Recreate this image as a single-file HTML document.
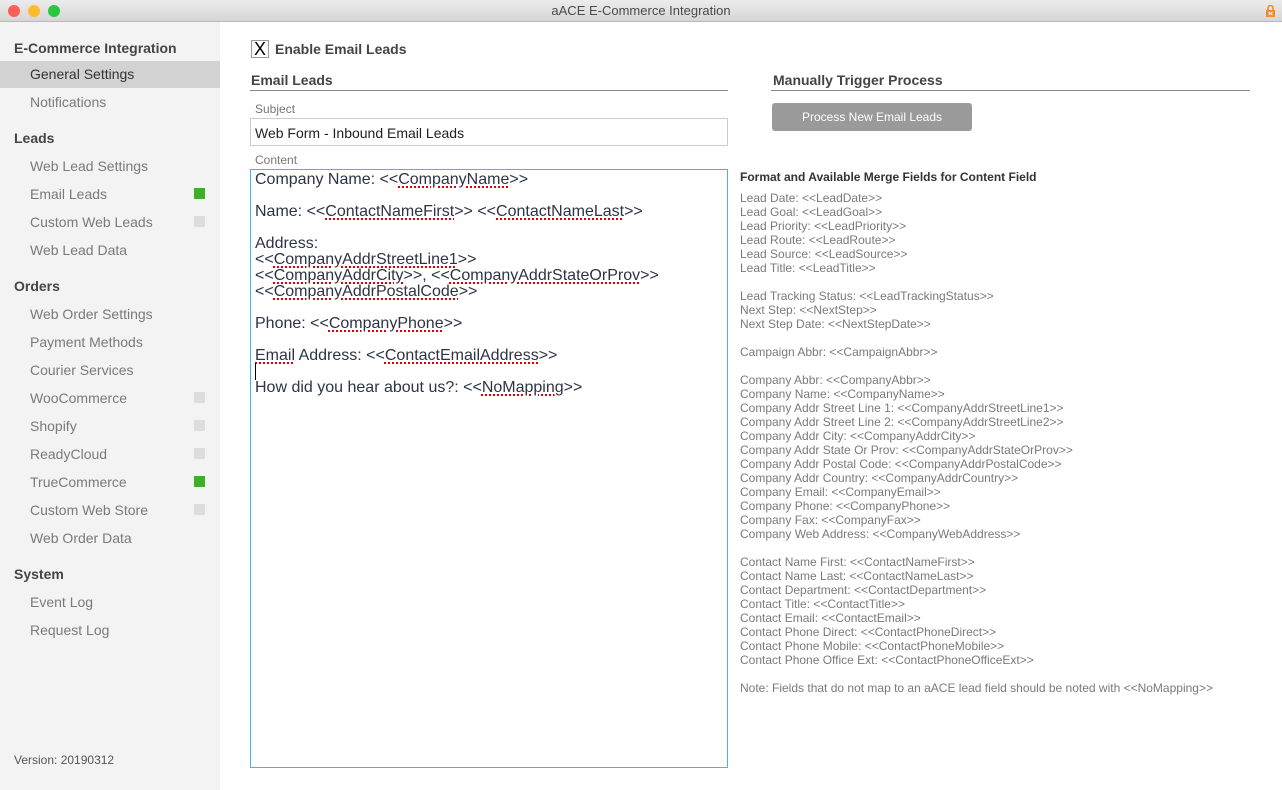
<!DOCTYPE html>
<html><head><style>
*{margin:0;padding:0;box-sizing:border-box}
body{width:1282px;height:790px;overflow:hidden;font-family:"Liberation Sans",sans-serif;background:#fff;position:relative}
.tb{position:absolute;left:0;top:0;width:1282px;height:22px;background:linear-gradient(#ececec,#d6d6d6);border-bottom:1px solid #b8b8b8;text-align:center;font-size:13px;line-height:22px;color:#4a4a4a}
.dot{position:absolute;top:5px;width:12px;height:12px;border-radius:50%}
.sb{position:absolute;left:0;top:22px;width:220px;height:768px;background:#f3f3f3}
.h{position:absolute;left:14px;font-size:14px;font-weight:bold;color:#444}
.i{position:absolute;left:30px;font-size:14px;color:#7a7a7a}
.sel{position:absolute;left:0;top:61px;width:220px;height:27px;background:#d2d2d2}
.sq{position:absolute;left:194px;width:11px;height:11px;background:#ddd}
.g{background:#3fae2a}
.abs{position:absolute}
.ta{position:absolute;left:250px;top:169px;width:478px;height:599px;border:1px solid #4ab2e6;padding:2px 4px;font-size:16px;line-height:16px;color:#2c3445}
.u{text-decoration:underline dotted #d00;text-decoration-thickness:2px;text-underline-offset:2px}
.mf{position:absolute;left:740px;top:191px;font-size:12px;line-height:14px;color:#7a7a7a;white-space:pre}
</style></head><body>
<div class="tb">aACE E-Commerce Integration
<div class="dot" style="left:8px;background:#fc5f57"></div>
<div class="dot" style="left:28px;background:#fdbc2e"></div>
<div class="dot" style="left:48px;background:#28c840"></div>
<svg class="abs" style="left:1265px;top:4px" width="11" height="14"><path d="M3 6V4a2.5 2.5 0 0 1 5 0v2" stroke="#f08a2c" stroke-width="1.6" fill="none"/><rect x="1" y="6" width="9" height="7" fill="#f08a2c"/><path d="M3.5 8l4 3M7.5 8l-4 3" stroke="#fff" stroke-width="1"/></svg>
</div>
<div class="sb">
<div class="sel" style="top:39px"></div>
<div class="h" style="top:18px">E-Commerce Integration</div>
<div class="i" style="top:44px;color:#333">General Settings</div>
<div class="i" style="top:72px">Notifications</div>
<div class="h" style="top:108px">Leads</div>
<div class="i" style="top:136px">Web Lead Settings</div>
<div class="i" style="top:164px">Email Leads</div><div class="sq g" style="top:166px"></div>
<div class="i" style="top:192px">Custom Web Leads</div><div class="sq" style="top:194px"></div>
<div class="i" style="top:220px">Web Lead Data</div>
<div class="h" style="top:256px">Orders</div>
<div class="i" style="top:284px">Web Order Settings</div>
<div class="i" style="top:312px">Payment Methods</div>
<div class="i" style="top:340px">Courier Services</div>
<div class="i" style="top:368px">WooCommerce</div><div class="sq" style="top:370px"></div>
<div class="i" style="top:396px">Shopify</div><div class="sq" style="top:398px"></div>
<div class="i" style="top:424px">ReadyCloud</div><div class="sq" style="top:426px"></div>
<div class="i" style="top:452px">TrueCommerce</div><div class="sq g" style="top:454px"></div>
<div class="i" style="top:480px">Custom Web Store</div><div class="sq" style="top:482px"></div>
<div class="i" style="top:508px">Web Order Data</div>
<div class="h" style="top:544px">System</div>
<div class="i" style="top:572px">Event Log</div>
<div class="i" style="top:600px">Request Log</div>
<div class="abs" style="left:14px;top:731px;font-size:12px;color:#555">Version: 20190312</div>
</div>
<div class="abs" style="left:251px;top:40px;width:18px;height:18px;border:1px solid #999;font-size:18px;line-height:16px;text-align:center;color:#000">X</div>
<div class="abs" style="left:275px;top:41px;font-size:14px;font-weight:bold;color:#444">Enable Email Leads</div>
<div class="abs" style="left:251px;top:72px;font-size:14px;font-weight:bold;color:#444">Email Leads</div>
<div class="abs" style="left:250px;top:90px;width:478px;height:1px;background:#888"></div>
<div class="abs" style="left:255px;top:102px;font-size:12px;color:#777">Subject</div>
<div class="abs" style="left:250px;top:118px;width:478px;height:28px;border:1px solid #ccc;padding:6px 4px;font-size:14px;color:#222">Web Form - Inbound Email Leads</div>
<div class="abs" style="left:255px;top:153px;font-size:12px;color:#777">Content</div>
<div class="ta">Company Name: &lt;&lt;<span class="u">CompanyName</span>&gt;&gt;<br><br>Name: &lt;&lt;<span class="u">ContactNameFirst</span>&gt;&gt; &lt;&lt;<span class="u">ContactNameLast</span>&gt;&gt;<br><br>Address:<br>&lt;&lt;<span class="u">CompanyAddrStreetLine1</span>&gt;&gt;<br>&lt;&lt;<span class="u">CompanyAddrCity</span>&gt;&gt;, &lt;&lt;<span class="u">CompanyAddrStateOrProv</span>&gt;&gt;<br>&lt;&lt;<span class="u">CompanyAddrPostalCode</span>&gt;&gt;<br><br>Phone: &lt;&lt;<span class="u">CompanyPhone</span>&gt;&gt;<br><br><span class="u">Email</span> Address: &lt;&lt;<span class="u">ContactEmailAddress</span>&gt;&gt;<br><span style="border-left:1px solid #000"></span><br>How did you hear about us?: &lt;&lt;<span class="u">NoMapping</span>&gt;&gt;</div>
<div class="abs" style="left:773px;top:72px;font-size:14px;font-weight:bold;color:#444">Manually Trigger Process</div>
<div class="abs" style="left:771px;top:90px;width:479px;height:1px;background:#888"></div>
<div class="abs" style="left:772px;top:103px;width:200px;height:28px;background:#9a9a9a;border-radius:3px;color:#fff;font-size:12px;line-height:28px;text-align:center">Process New Email Leads</div>
<div class="abs" style="left:740px;top:170px;font-size:12px;font-weight:bold;color:#333">Format and Available Merge Fields for Content Field</div>
<div class="mf">Lead Date: &lt;&lt;LeadDate&gt;&gt;
Lead Goal: &lt;&lt;LeadGoal&gt;&gt;
Lead Priority: &lt;&lt;LeadPriority&gt;&gt;
Lead Route: &lt;&lt;LeadRoute&gt;&gt;
Lead Source: &lt;&lt;LeadSource&gt;&gt;
Lead Title: &lt;&lt;LeadTitle&gt;&gt;

Lead Tracking Status: &lt;&lt;LeadTrackingStatus&gt;&gt;
Next Step: &lt;&lt;NextStep&gt;&gt;
Next Step Date: &lt;&lt;NextStepDate&gt;&gt;

Campaign Abbr: &lt;&lt;CampaignAbbr&gt;&gt;

Company Abbr: &lt;&lt;CompanyAbbr&gt;&gt;
Company Name: &lt;&lt;CompanyName&gt;&gt;
Company Addr Street Line 1: &lt;&lt;CompanyAddrStreetLine1&gt;&gt;
Company Addr Street Line 2: &lt;&lt;CompanyAddrStreetLine2&gt;&gt;
Company Addr City: &lt;&lt;CompanyAddrCity&gt;&gt;
Company Addr State Or Prov: &lt;&lt;CompanyAddrStateOrProv&gt;&gt;
Company Addr Postal Code: &lt;&lt;CompanyAddrPostalCode&gt;&gt;
Company Addr Country: &lt;&lt;CompanyAddrCountry&gt;&gt;
Company Email: &lt;&lt;CompanyEmail&gt;&gt;
Company Phone: &lt;&lt;CompanyPhone&gt;&gt;
Company Fax: &lt;&lt;CompanyFax&gt;&gt;
Company Web Address: &lt;&lt;CompanyWebAddress&gt;&gt;

Contact Name First: &lt;&lt;ContactNameFirst&gt;&gt;
Contact Name Last: &lt;&lt;ContactNameLast&gt;&gt;
Contact Department: &lt;&lt;ContactDepartment&gt;&gt;
Contact Title: &lt;&lt;ContactTitle&gt;&gt;
Contact Email: &lt;&lt;ContactEmail&gt;&gt;
Contact Phone Direct: &lt;&lt;ContactPhoneDirect&gt;&gt;
Contact Phone Mobile: &lt;&lt;ContactPhoneMobile&gt;&gt;
Contact Phone Office Ext: &lt;&lt;ContactPhoneOfficeExt&gt;&gt;

Note: Fields that do not map to an aACE lead field should be noted with &lt;&lt;NoMapping&gt;&gt;</div>
</body></html>
